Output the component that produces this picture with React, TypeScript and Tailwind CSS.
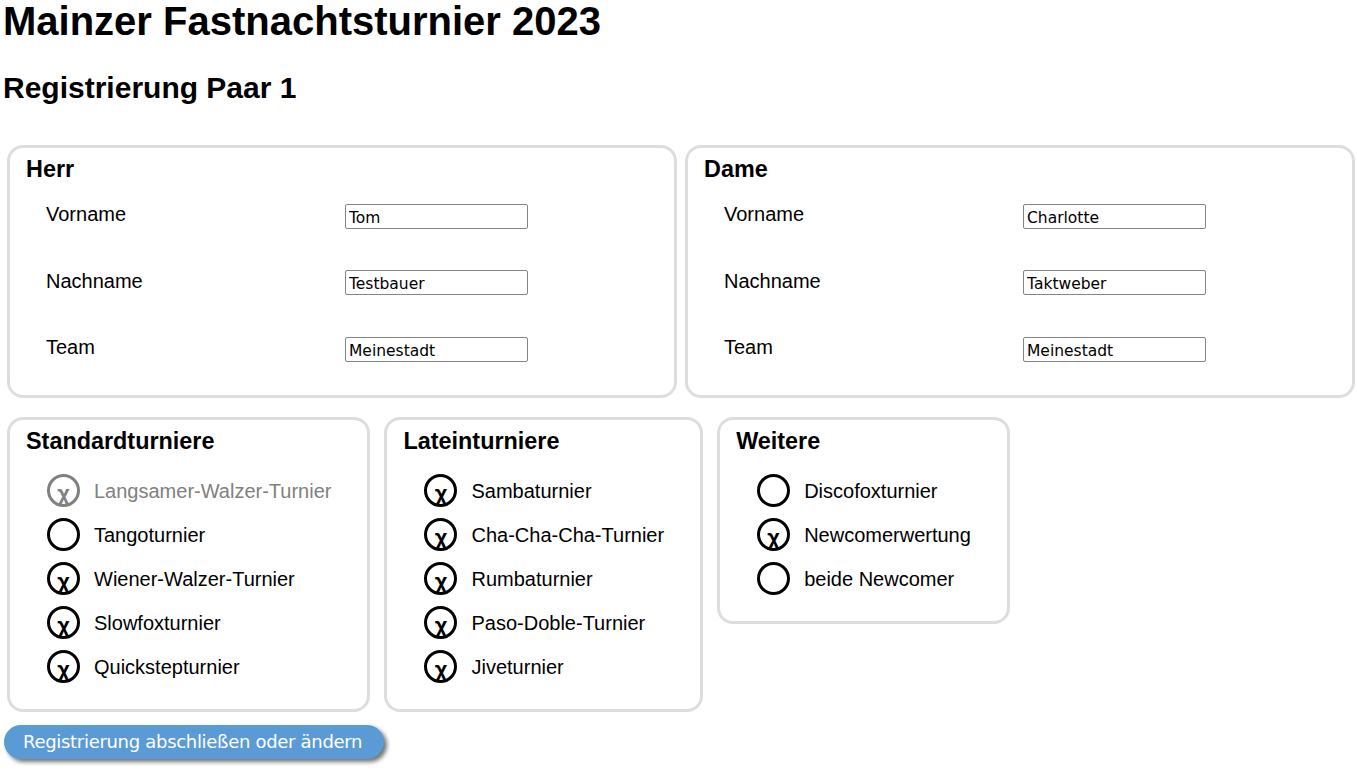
const sans = "font-['Liberation_Sans',Arial,sans-serif]";
const uiFont = "font-['DejaVu_Sans',Tahoma,sans-serif]";

type Person = { title: string; vorname: string; nachname: string; team: string };

const herr: Person = { title: "Herr", vorname: "Tom", nachname: "Testbauer", team: "Meinestadt" };
const dame: Person = { title: "Dame", vorname: "Charlotte", nachname: "Taktweber", team: "Meinestadt" };

type Option = { label: string; checked: boolean; disabled?: boolean };

const standard: Option[] = [
  { label: "Langsamer-Walzer-Turnier", checked: true, disabled: true },
  { label: "Tangoturnier", checked: false },
  { label: "Wiener-Walzer-Turnier", checked: true },
  { label: "Slowfoxturnier", checked: true },
  { label: "Quickstepturnier", checked: true },
];

const latein: Option[] = [
  { label: "Sambaturnier", checked: true },
  { label: "Cha-Cha-Cha-Turnier", checked: true },
  { label: "Rumbaturnier", checked: true },
  { label: "Paso-Doble-Turnier", checked: true },
  { label: "Jiveturnier", checked: true },
];

const weitere: Option[] = [
  { label: "Discofoxturnier", checked: false },
  { label: "Newcomerwertung", checked: true },
  { label: "beide Newcomer", checked: false },
];

function Box({ title, children, className = "" }: { title: string; children: React.ReactNode; className?: string }) {
  return (
    <section className={`border-[3px] border-[#dddddd] rounded-[16px] px-[16px] pt-2 ${className}`}>
      <h3 className="text-[23.4px] leading-[27px] font-bold">{title}</h3>
      {children}
    </section>
  );
}

function PersonBox({ p }: { p: Person }) {
  const rows: [string, string][] = [
    ["Vorname", p.vorname],
    ["Nachname", p.nachname],
    ["Team", p.team],
  ];
  return (
    <Box title={p.title} className="pb-3">
      {rows.map(([label, value]) => (
        <div key={label} className="flex items-center h-[66.5px]">
          <span className="w-[319px] pl-[20px] pb-[4px] text-[20px]">{label}</span>
          <input
            readOnly
            value={value}
            className={`w-[183px] h-[25px] border border-[#858585] rounded-[2px] px-[3px] pt-[3px] text-[15.5px] text-black outline-none ${uiFont}`}
          />
        </div>
      ))}
    </Box>
  );
}

function Check({ o }: { o: Option }) {
  const tone = o.disabled ? "text-[#808080] border-[#808080]" : "text-black border-black";
  return (
    <div className={`flex items-center gap-[14px] h-[44px] ${o.disabled ? "text-[#808080]" : ""}`}>
      <span className={`flex items-center justify-center w-[33px] h-[33px] shrink-0 rounded-full border-[3.5px] ${tone}`}>
        <span className="text-[22px] font-bold leading-none translate-y-[3px]">{o.checked ? "χ" : ""}</span>
      </span>
      <span className="text-[20px] whitespace-nowrap">{o.label}</span>
    </div>
  );
}

function CheckBox({ title, options }: { title: string; options: Option[] }) {
  return (
    <Box title={title} className="pb-[20px]">
      <div className="pl-[21px] pr-[20px] pt-[14px]">
        {options.map((o) => (
          <Check key={o.label} o={o} />
        ))}
      </div>
    </Box>
  );
}

export default function App() {
  return (
    <div className={`min-h-screen bg-white text-black ${sans}`}>
      <h1 className="text-[40px] leading-[40px] font-bold pl-[3px] pt-px">Mainzer Fastnachtsturnier 2023</h1>
      <h2 className="text-[30px] leading-[30px] font-bold pl-[3px] mt-[32px]">Registrierung Paar 1</h2>

      <div className="grid grid-cols-2 gap-[8px] pl-[7px] pr-[2px] mt-[42px]">
        <PersonBox p={herr} />
        <PersonBox p={dame} />
      </div>

      <div className="flex items-start gap-[14px] pl-[7px] mt-[19px]">
        <CheckBox title="Standardturniere" options={standard} />
        <CheckBox title="Lateinturniere" options={latein} />
        <CheckBox title="Weitere" options={weitere} />
      </div>

      <button
        className={`ml-[4px] mt-[13px] h-[34px] w-[380px] rounded-full bg-[#5b9bd5] text-white text-left pl-[19px] text-[18px] tracking-[-0.3px] shadow-[3px_3px_4px_rgba(0,0,0,0.55)] ${uiFont}`}
      >
        Registrierung abschließen oder ändern
      </button>
    </div>
  );
}
